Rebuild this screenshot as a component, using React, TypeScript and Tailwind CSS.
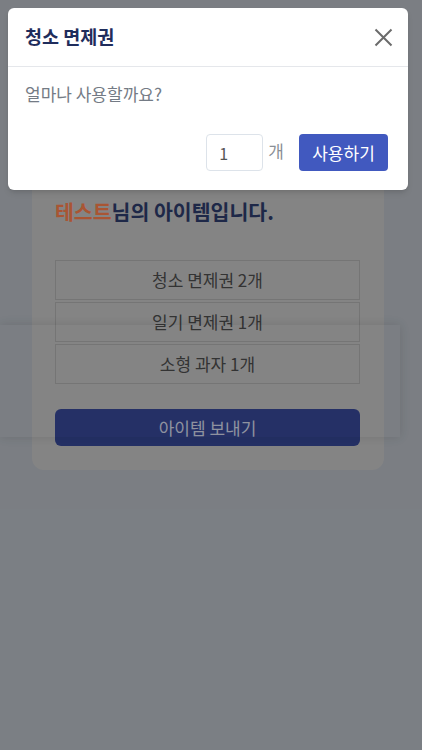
import React from 'react';

const items = ['청소 면제권 2개', '일기 면제권 1개', '소형 과자 1개'];

export default function App() {
  return (
    <div
      className="relative w-full h-[750px] overflow-hidden bg-[#b0b5bc]"
      style={{ fontFamily: '"Noto Sans CJK KR", "Noto Sans", sans-serif' }}
    >
      {/* Page behind the modal */}
      <div className="pt-[150px] pl-8 pr-[38px]">
        <div className="bg-[#bebebe] rounded-xl pl-[23px] pr-6 pt-[47px] pb-6">
          <h2 className="text-[20.5px] font-bold leading-[28px] text-[#2c3a68]">
            <span className="text-[#f27a4a]">테스트</span>님의 아이템입니다.
          </h2>
          <div className="mt-[35px] flex flex-col gap-[2px]">
            {items.map((it) => (
              <div
                key={it}
                className="h-[40px] border border-[#a8a8a8] flex items-center justify-center text-[17px] text-[#4a4a4a]"
              >
                {it}
              </div>
            ))}
          </div>
          <button className="mt-[25px] w-full h-[37px] rounded-md bg-[#354692] text-[17px] text-[#cdd2e4]">
            아이템 보내기
          </button>
        </div>
      </div>

      {/* Sheet edge behind */}
      <div className="absolute left-0 right-[22px] top-[325px] h-[112px] shadow-[0_0_10px_rgba(0,0,0,0.12)]" />

      {/* Backdrop */}
      <div className="absolute inset-0 bg-black/30" />

      {/* Modal */}
      <div className="absolute top-2 left-2 w-[400px] bg-white rounded-md shadow-md">
        <div className="h-[59px] px-[17px] flex items-center justify-between border-b border-[#e5e7eb]">
          <h3 className="text-[18.5px] font-bold text-[#1f2d5c]">청소 면제권</h3>
          <button className="w-5 h-5 flex items-center justify-center text-[#6b6b6b] mr-[-2px]">
            <svg width="19" height="19" viewBox="0 0 19 19" fill="none" stroke="currentColor" strokeWidth="2">
              <path d="M1.5 1.5 L17.5 17.5 M17.5 1.5 L1.5 17.5" />
            </svg>
          </button>
        </div>
        <div className="px-[17px] pt-[15px] pb-[19px]">
          <p className="text-[17px] leading-[24px] text-[#747b85]">얼마나 사용할까요?</p>
          <div className="mt-[28px] flex items-start justify-end pr-[3px]">
            <div className="w-[57px] h-[37px] border border-[#dde3ea] rounded-[4px] flex items-center pl-[12px] text-[16px] text-[#555]">
              1
            </div>
            <span className="ml-[5px] mt-[4px] text-[17px] text-[#8a8f96]">개</span>
            <button className="ml-[15px] w-[89px] h-[37px] rounded-[4px] bg-[#4159bf] text-white text-[17px]">
              사용하기
            </button>
          </div>
        </div>
      </div>
    </div>
  );
}
